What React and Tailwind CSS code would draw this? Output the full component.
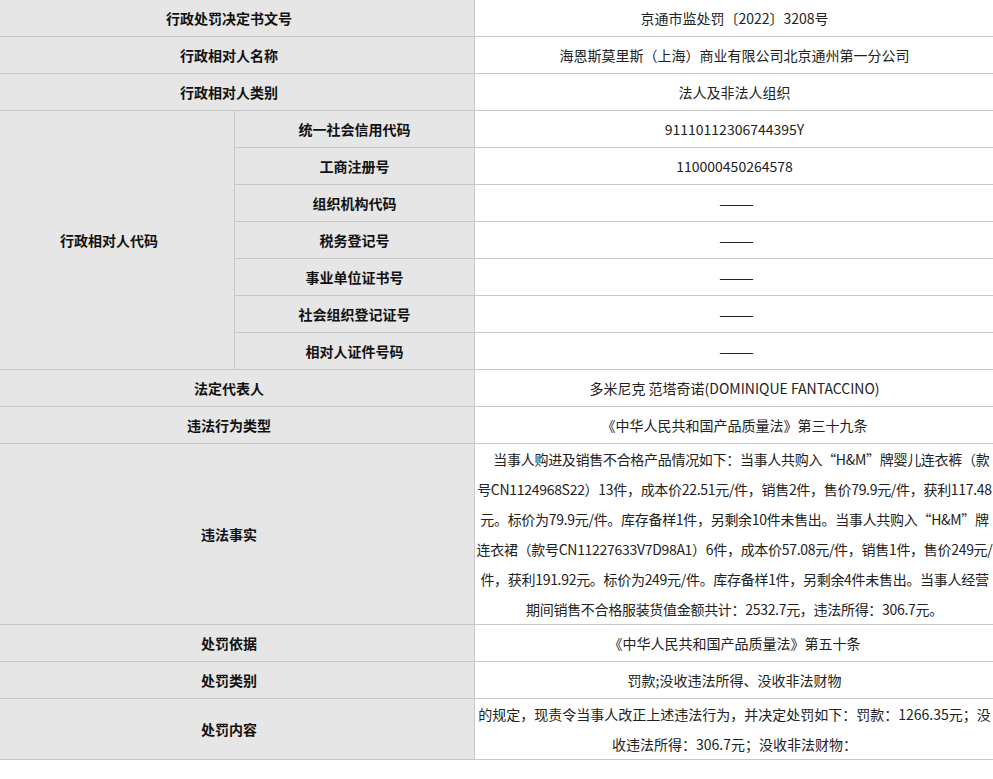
export default function App() {
  const L = "border border-[#c8c8c8] bg-[#e6e6e6] text-center font-bold text-[14px] text-[#111] h-[37px] pl-0 pr-4";
  const V = "border border-[#c8c8c8] bg-white text-center text-[14px] text-[#222] px-0 leading-[30px]";
  const simple = (label, val, extra = "") => (
    <tr>
      <td colSpan={2} className={L}>{label}</td>
      <td className={V + extra}>{val}</td>
    </tr>
  );
  const sub = [
    ["统一社会信用代码", "91110112306744395Y"],
    ["工商注册号", "110000450264578"],
    ["组织机构代码", "———"],
    ["税务登记号", "———"],
    ["事业单位证书号", "———"],
    ["社会组织登记证号", "———"],
    ["相对人证件号码", "———"],
  ];
  return (
    <div className="w-[993px] h-[779px] overflow-hidden bg-white" style={{ fontFamily: '"Microsoft YaHei","Noto Sans CJK SC",sans-serif' }}>
      <table className="w-[995px] -ml-px -mt-px table-fixed border-collapse">
        <colgroup>
          <col className="w-[235px]" />
          <col className="w-[240px]" />
          <col className="w-[520px]" />
        </colgroup>
        <tbody>
          {simple("行政处罚决定书文号", "京通市监处罚〔2022〕3208号")}
          {simple("行政相对人名称", "海恩斯莫里斯（上海）商业有限公司北京通州第一分公司")}
          {simple("行政相对人类别", "法人及非法人组织")}
          {sub.map(([a, b], i) => (
            <tr key={i}>
              {i === 0 && <td rowSpan={7} className={L}>行政相对人代码</td>}
              <td className={L.replace("pr-4", "pr-0")}>{a}</td>
              <td className={V + (b.startsWith("—") ? " tracking-[-4px]" : "")}>{b}</td>
            </tr>
          ))}
          {simple("法定代表人", "多米尼克 范塔奇诺(DOMINIQUE FANTACCINO)")}
          {simple("违法行为类型", "《中华人民共和国产品质量法》第三十九条")}
          {simple("违法事实", "\u3000当事人购进及销售不合格产品情况如下：当事人共购入“H&M”牌婴儿连衣裤（款号CN1124968S22）13件，成本价22.51元/件，销售2件，售价79.9元/件，获利117.48元。标价为79.9元/件。库存备样1件，另剩余10件未售出。当事人共购入“H&M”牌连衣裙（款号CN11227633V7D98A1）6件，成本价57.08元/件，销售1件，售价249元/件，获利191.92元。标价为249元/件。库存备样1件，另剩余4件未售出。当事人经营期间销售不合格服装货值金额共计：2532.7元，违法所得：306.7元。", " tracking-[-0.3px]")}
          {simple("处罚依据", "《中华人民共和国产品质量法》第五十条")}
          {simple("处罚类别", "罚款;没收违法所得、没收非法财物")}
          {simple("处罚内容", "的规定，现责令当事人改正上述违法行为，并决定处罚如下：罚款：1266.35元；没收违法所得：306.7元；没收非法财物：")}
        </tbody>
      </table>
    </div>
  );
}
